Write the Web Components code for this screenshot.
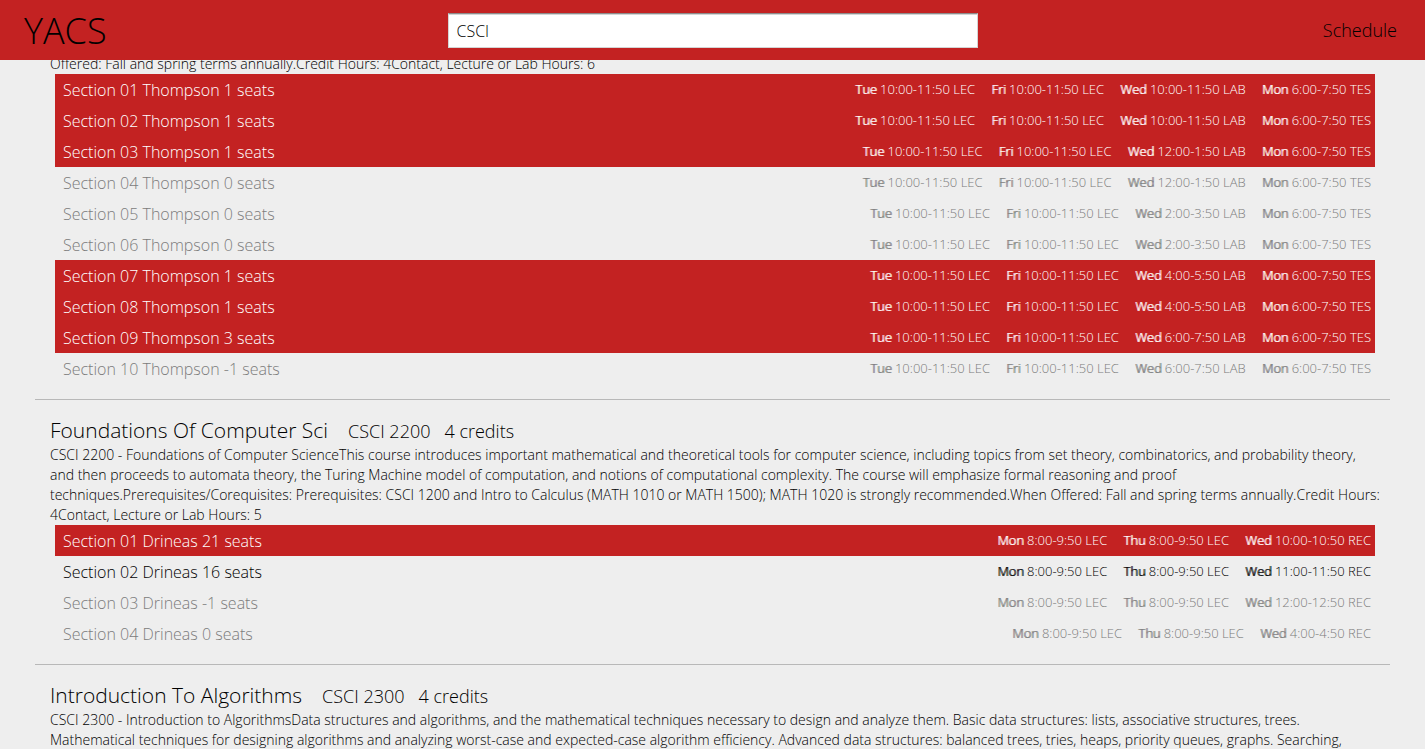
<!DOCTYPE html>
<html lang="en">
<head>
<meta charset="utf-8">
<title>YACS</title>
<style>
  html, body { margin: 0; height: 100%; }
  body {
    --brand: #c32222;
    --page: #eeeeee;
    --muted: #7c7c7c;
    --rule: #b8b8b8;
    background: var(--page);
    color: #000;
    font-family: "Open Sans", sans-serif;
    font-weight: 300;
  }
</style>
</head>
<body>
<yacs-app></yacs-app>

<script>
  const define = (name, html, setup) => {
    const template = document.createElement('template');
    template.innerHTML = html;
    customElements.define(name, class extends HTMLElement {
      constructor() {
        super();
        this.attachShadow({ mode: 'open' }).append(template.content.cloneNode(true));
      }
      connectedCallback() {
        if (setup) setup(this, this.shadowRoot);
      }
    });
  };

  // Top bar: brand, course search, schedule link
  define('yacs-header', `
    <style>
      :host { display: block; background: var(--brand); }
      header {
        display: grid;
        grid-template-columns: 1fr minmax(0, 530px) 1fr;
        align-items: center;
        box-sizing: border-box;
        height: 60px;
        padding: 0 24px;
      }
      a { color: #000; text-decoration: none; }
      .brand { padding-top: 2px; font-size: 36px; line-height: 58px; }
      .schedule { justify-self: end; padding-right: 4px; font-size: 18px; line-height: 60px; }
      input {
        box-sizing: border-box;
        width: 100%;
        height: 35px;
        margin: 0;
        padding: 2px 8px 0;
        border: 1px solid #d4d4d4;
        border-top-color: #8c8c8c;
        border-radius: 0;
        box-shadow: inset 0 1px 0 #d4d4d4;
        background-color: #fff;
        color: #000;
        font: inherit;
        font-size: 16px;
        outline: none;
      }
    </style>
    <header>
      <a class="brand" href="#">YACS</a>
      <input type="text" aria-label="Search courses" value="CSCI">
      <a class="schedule" href="#schedule">Schedule</a>
    </header>`);

  // A day, its hours and the kind of meeting
  define('yacs-period', `
    <style>
      :host { display: block; white-space: nowrap; }
      b { font-weight: 300; text-shadow: 1px 0 currentColor; }
    </style>
    <b></b> <span></span>`, (host, root) => {
      root.querySelector('b').textContent = host.getAttribute('day');
      root.querySelector('span').textContent = host.getAttribute('time');
    });

  // One selectable section of a course; state: selected, closed or open
  define('yacs-section', `
    <style>
      :host { display: block; }
      button {
        display: flex;
        justify-content: space-between;
        align-items: center;
        width: 100%;
        height: 31px;
        margin: 0;
        padding: 0 4px 0 8px;
        border: 0;
        background: none;
        color: inherit;
        font: inherit;
        text-align: left;
        cursor: pointer;
      }
      :host([state="selected"]) button { background: var(--brand); color: #fff; }
      :host([state="closed"]) button { color: var(--muted); }
      .name { padding-top: 2px; font-size: 16px; line-height: 29px; }
      .times { display: flex; gap: 16px; font-size: 13px; line-height: 31px; }
    </style>
    <button type="button">
      <span class="name"></span>
      <span class="times"></span>
    </button>`, (host, root) => {
      root.querySelector('button').setAttribute('aria-pressed', host.getAttribute('state') === 'selected');
      root.querySelector('.name').textContent = host.getAttribute('name');
      const times = root.querySelector('.times');
      times.replaceChildren(...host.getAttribute('periods').split(', ').map(period => {
        const el = document.createElement('yacs-period');
        const [day, ...time] = period.split(' ');
        el.setAttribute('day', day);
        el.setAttribute('time', time.join(' '));
        return el;
      }));
    });

  // A course: heading, catalog description and its sections
  define('yacs-course', `
    <style>
      :host { display: block; padding: 0 15px 15px; }
      :host(:not(:first-of-type)) { border-top: 1px solid var(--rule); padding-top: 15px; }
      .heading { display: flex; align-items: baseline; height: 30px; line-height: 30px; }
      .heading[hidden] { display: none; }
      h2 { margin: 0 20px 0 0; font-size: 21px; font-weight: inherit; }
      .code { margin-right: 14px; }
      .code, .credits { font-size: 18px; }
      p { margin: 0 -8px 0 0; font-size: 14px; line-height: 20px; }
      .sections { padding: 0 0 0 5px; }
    </style>
    <div class="heading">
      <h2></h2><span class="code"></span><span class="credits"></span>
    </div>
    <p><slot name="description"></slot></p>
    <div class="sections"><slot></slot></div>`, (host, root) => {
      root.querySelector('.heading').hidden = !host.hasAttribute('name');
      root.querySelector('h2').textContent = host.getAttribute('name');
      root.querySelector('.code').textContent = host.getAttribute('code');
      root.querySelector('.credits').textContent = host.getAttribute('credits');
    });

  define('yacs-app', `
    <style>
      :host { display: block; height: 100vh; overflow: hidden; }
      yacs-header { position: fixed; top: 0; left: 0; right: 0; z-index: 1; }
      main { padding: 54px 35px 0; }
    </style>
    <yacs-header></yacs-header>
    <main>
      <yacs-course>
        <span slot="description">Offered: Fall and spring terms annually.Credit Hours: 4Contact, Lecture or Lab Hours: 6</span>
        <yacs-section state="selected" name="Section 01 Thompson 1 seats" periods="Tue 10:00-11:50 LEC, Fri 10:00-11:50 LEC, Wed 10:00-11:50 LAB, Mon 6:00-7:50 TES"></yacs-section>
        <yacs-section state="selected" name="Section 02 Thompson 1 seats" periods="Tue 10:00-11:50 LEC, Fri 10:00-11:50 LEC, Wed 10:00-11:50 LAB, Mon 6:00-7:50 TES"></yacs-section>
        <yacs-section state="selected" name="Section 03 Thompson 1 seats" periods="Tue 10:00-11:50 LEC, Fri 10:00-11:50 LEC, Wed 12:00-1:50 LAB, Mon 6:00-7:50 TES"></yacs-section>
        <yacs-section state="closed" name="Section 04 Thompson 0 seats" periods="Tue 10:00-11:50 LEC, Fri 10:00-11:50 LEC, Wed 12:00-1:50 LAB, Mon 6:00-7:50 TES"></yacs-section>
        <yacs-section state="closed" name="Section 05 Thompson 0 seats" periods="Tue 10:00-11:50 LEC, Fri 10:00-11:50 LEC, Wed 2:00-3:50 LAB, Mon 6:00-7:50 TES"></yacs-section>
        <yacs-section state="closed" name="Section 06 Thompson 0 seats" periods="Tue 10:00-11:50 LEC, Fri 10:00-11:50 LEC, Wed 2:00-3:50 LAB, Mon 6:00-7:50 TES"></yacs-section>
        <yacs-section state="selected" name="Section 07 Thompson 1 seats" periods="Tue 10:00-11:50 LEC, Fri 10:00-11:50 LEC, Wed 4:00-5:50 LAB, Mon 6:00-7:50 TES"></yacs-section>
        <yacs-section state="selected" name="Section 08 Thompson 1 seats" periods="Tue 10:00-11:50 LEC, Fri 10:00-11:50 LEC, Wed 4:00-5:50 LAB, Mon 6:00-7:50 TES"></yacs-section>
        <yacs-section state="selected" name="Section 09 Thompson 3 seats" periods="Tue 10:00-11:50 LEC, Fri 10:00-11:50 LEC, Wed 6:00-7:50 LAB, Mon 6:00-7:50 TES"></yacs-section>
        <yacs-section state="closed" name="Section 10 Thompson -1 seats" periods="Tue 10:00-11:50 LEC, Fri 10:00-11:50 LEC, Wed 6:00-7:50 LAB, Mon 6:00-7:50 TES"></yacs-section>
      </yacs-course>
      <yacs-course name="Foundations Of Computer Sci" code="CSCI 2200" credits="4 credits">
        <span slot="description">CSCI 2200 - Foundations of Computer ScienceThis course introduces important mathematical and theoretical tools for computer science, including topics from set theory, combinatorics, and probability theory, and then proceeds to automata theory, the Turing Machine model of computation, and notions of computational complexity. The course will emphasize formal reasoning and proof techniques.Prerequisites/Corequisites: Prerequisites: CSCI 1200 and Intro to Calculus (MATH 1010 or MATH 1500); MATH 1020 is strongly recommended.When Offered: Fall and spring terms annually.Credit Hours: 4Contact, Lecture or Lab Hours: 5</span>
        <yacs-section state="selected" name="Section 01 Drineas 21 seats" periods="Mon 8:00-9:50 LEC, Thu 8:00-9:50 LEC, Wed 10:00-10:50 REC"></yacs-section>
        <yacs-section state="open" name="Section 02 Drineas 16 seats" periods="Mon 8:00-9:50 LEC, Thu 8:00-9:50 LEC, Wed 11:00-11:50 REC"></yacs-section>
        <yacs-section state="closed" name="Section 03 Drineas -1 seats" periods="Mon 8:00-9:50 LEC, Thu 8:00-9:50 LEC, Wed 12:00-12:50 REC"></yacs-section>
        <yacs-section state="closed" name="Section 04 Drineas 0 seats" periods="Mon 8:00-9:50 LEC, Thu 8:00-9:50 LEC, Wed 4:00-4:50 REC"></yacs-section>
      </yacs-course>
      <yacs-course name="Introduction To Algorithms" code="CSCI 2300" credits="4 credits">
        <span slot="description">CSCI 2300 - Introduction to AlgorithmsData structures and algorithms, and the mathematical techniques necessary to design and analyze them. Basic data structures: lists, associative structures, trees. Mathematical techniques for designing algorithms and analyzing worst-case and expected-case algorithm efficiency. Advanced data structures: balanced trees, tries, heaps, priority queues, graphs. Searching,</span>
      </yacs-course>
    </main>`);
</script>
</body>
</html>
